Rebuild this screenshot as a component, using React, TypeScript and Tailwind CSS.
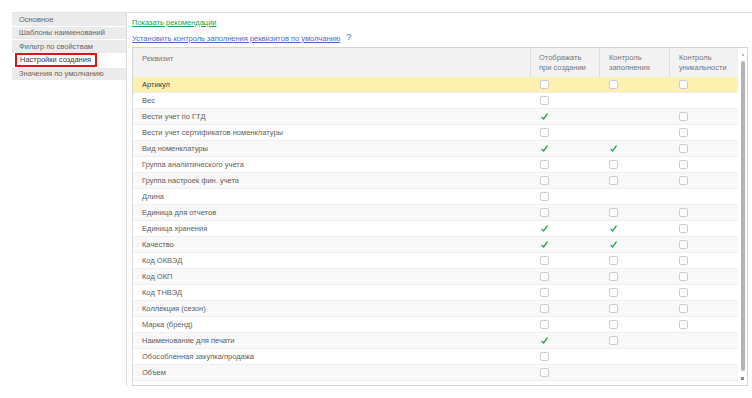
import React from 'react';

type Cell = 'c' | 'u' | '';

const tabs = [
  'Основное',
  'Шаблоны наименований',
  'Фильтр по свойствам',
  'Настройки создания',
  'Значения по умолчанию',
];

const rows: [string, Cell, Cell, Cell][] = [
  ['Артикул', 'u', 'u', 'u'],
  ['Вес', 'u', '', ''],
  ['Вести учет по ГТД', 'c', '', 'u'],
  ['Вести учет сертификатов номенклатуры', 'u', '', 'u'],
  ['Вид номенклатуры', 'c', 'c', 'u'],
  ['Группа аналитического учета', 'u', 'u', 'u'],
  ['Группа настроек фин. учета', 'u', 'u', 'u'],
  ['Длина', 'u', '', ''],
  ['Единица для отчетов', 'u', 'u', 'u'],
  ['Единица хранения', 'c', 'c', 'u'],
  ['Качество', 'c', 'c', 'u'],
  ['Код ОКВЭД', 'u', 'u', 'u'],
  ['Код ОКП', 'u', 'u', 'u'],
  ['Код ТНВЭД', 'u', 'u', 'u'],
  ['Коллекция (сезон)', 'u', 'u', 'u'],
  ['Марка (бренд)', 'u', 'u', 'u'],
  ['Наименование для печати', 'c', 'u', ''],
  ['Обособленная закупка/продажа', 'u', '', ''],
  ['Объем', 'u', '', ''],
];

function Box({ v }: { v: Cell }) {
  if (v === '') return null;
  if (v === 'c') {
    return (
      <svg width="9" height="9" viewBox="0 0 9 9" className="block">
        <path d="M2 5.2 L3.6 7 L7.2 2" fill="none" stroke="#35a35a" strokeWidth="1.3" strokeLinecap="round" strokeLinejoin="round" />
      </svg>
    );
  }
  return <div className="w-[9px] h-[9px] border border-[#cdcdcd] rounded-[2px] bg-white" />;
}

export default function App() {
  return (
    <div className="w-[752px] h-[398px] bg-white text-[7.5px] text-[#5e5e5e] overflow-hidden" style={{ fontFamily: '"Liberation Sans", Arial, sans-serif' }}>
      <div className="pt-[12px] pl-[12px]">
        <div className="flex border-t border-[#e2e2e2] h-[374px]">
          {/* left tabs */}
          <div className="w-[115px] border-r border-[#dcdcdc] flex flex-col">
            {tabs.map((t, i) =>
              i === 3 ? (
                <div key={t} className="h-[14px] bg-white flex items-center pl-[3px] border-b border-white">
                  <div className="border-2 border-[#e4101b] h-[14px] pl-[3px] pr-[4px] flex items-center text-[#3a3a3a]">{t}</div>
                </div>
              ) : (
                <div key={t} className="h-[13.5px] bg-[#ebebeb] border-b border-white flex items-center pl-[7px] text-[#666]">
                  {t}
                </div>
              ),
            )}
          </div>

          {/* content */}
          <div className="flex-1 pl-[5px] pr-[4px]">
            <div className="h-[16px] flex items-end pb-[1px]">
              <span className="text-[#22a352] underline">Показать рекомендации</span>
            </div>
            <div className="h-[17px] flex items-end gap-[6px] pb-[2px]">
              <span className="text-[#4a6fbf] underline">Установить контроль заполнения реквизитов по умолчанию</span>
              <span className="text-[#4a6fbf] text-[9px]">?</span>
            </div>

            <div className="mt-[1px] border border-[#d6d6d6] h-[339px] flex">
              <div className="flex-1 flex flex-col">
                <div className="grid grid-cols-[397px_69px_70px_69px] h-[29px] bg-[#f2f2f2] text-[#767676]">
                  <div className="pl-[9px] pt-[5px]">Реквизит</div>
                  <div className="pl-[8px] pt-[5px] border-l border-[#e0e0e0] leading-[10px]">Отображать<br />при создании</div>
                  <div className="pl-[9px] pt-[5px] border-l border-[#e0e0e0] leading-[10px]">Контроль<br />заполнения</div>
                  <div className="pl-[9px] pt-[5px] border-l border-[#e0e0e0] leading-[10px]">Контроль<br />уникальности</div>
                </div>
                {rows.map(([name, a, b, c], i) => (
                  <div
                    key={name}
                    className={`grid grid-cols-[397px_69px_70px_69px] h-[16px] items-center border-b border-[#efefef] ${i === 0 ? 'bg-[#fcf0ae] text-[#3a3a3a]' : i % 2 === 0 ? 'bg-[#f8f8f8]' : 'bg-white'}`}
                  >
                    <div className="pl-[9px] truncate">{name}</div>
                    <div className="pl-[10px] flex items-center"><Box v={a} /></div>
                    <div className="pl-[10px] flex items-center"><Box v={b} /></div>
                    <div className="pl-[10px] flex items-center"><Box v={c} /></div>
                  </div>
                ))}
              </div>
              {/* scrollbar */}
              <div className="w-[9px] flex flex-col items-center pt-[6px] pb-[5px]">
                <div className="w-[2px] h-[2px] bg-[#bdbdbd]" />
                <div className="mt-[5px] flex-1 w-[4px] rounded-[2px] bg-[#b3b3b3]" />
                <div className="mt-[6px] w-[3px] h-[3px] bg-[#8c8c8c]" />
              </div>
            </div>
          </div>
        </div>
      </div>
    </div>
  );
}
